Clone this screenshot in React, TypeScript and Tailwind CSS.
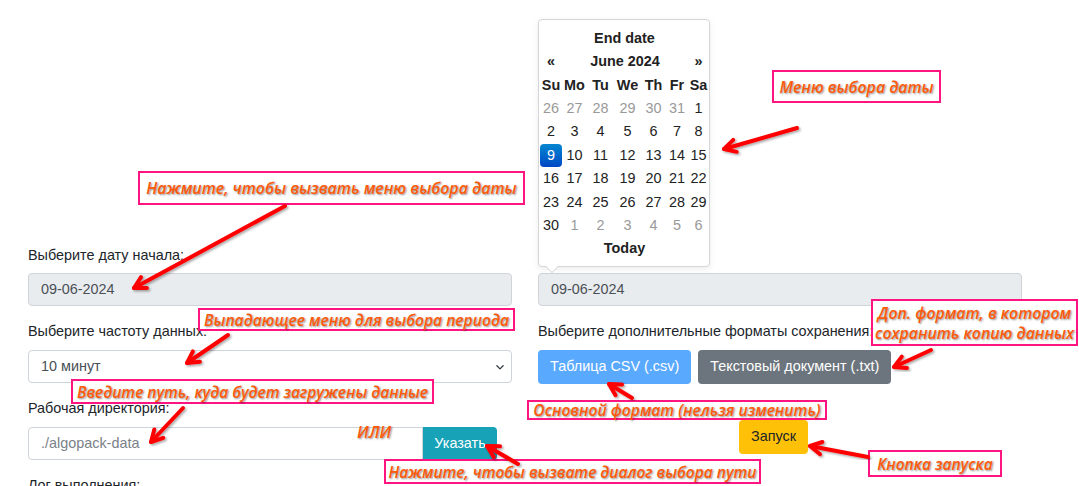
import { useMemo } from 'react'

type Note = {
  text: string[]
  x: number
  y: number
  w: number
  h: number
  size: string
}

type Arrow = { x1: number; y1: number; x2: number; y2: number }

const weeks: { d: number; muted?: boolean; active?: boolean }[][] = [
  [{ d: 26, muted: true }, { d: 27, muted: true }, { d: 28, muted: true }, { d: 29, muted: true }, { d: 30, muted: true }, { d: 31, muted: true }, { d: 1 }],
  [{ d: 2 }, { d: 3 }, { d: 4 }, { d: 5 }, { d: 6 }, { d: 7 }, { d: 8 }],
  [{ d: 9, active: true }, { d: 10 }, { d: 11 }, { d: 12 }, { d: 13 }, { d: 14 }, { d: 15 }],
  [{ d: 16 }, { d: 17 }, { d: 18 }, { d: 19 }, { d: 20 }, { d: 21 }, { d: 22 }],
  [{ d: 23 }, { d: 24 }, { d: 25 }, { d: 26 }, { d: 27 }, { d: 28 }, { d: 29 }],
  [{ d: 30 }, { d: 1, muted: true }, { d: 2, muted: true }, { d: 3, muted: true }, { d: 4, muted: true }, { d: 5, muted: true }, { d: 6, muted: true }],
]

function DatePicker() {
  return (
    <div className="absolute left-[538px] top-[19px] h-[248px] w-[172px] rounded-[4px] border border-[#d6d6d6] bg-white shadow-[0_2px_6px_rgba(0,0,0,0.08)]">
      <div className="grid grid-cols-[22px_25px_27px_27px_25px_22px_21px] auto-rows-[23.4px] items-center pl-[1px] pt-[7px] text-center text-[14.4px] text-[#222]">
        <div className="col-span-7 font-bold">End date</div>
        <div className="font-bold">«</div>
        <div className="col-span-5 font-bold">June 2024</div>
        <div className="font-bold">»</div>
        {['Su', 'Mo', 'Tu', 'We', 'Th', 'Fr', 'Sa'].map((d) => (
          <div key={d} className="font-bold">{d}</div>
        ))}
        {weeks.flat().map((c, i) =>
          c.active ? (
            <div key={i} className="flex h-[23px] items-center justify-center rounded-[4px] bg-gradient-to-b from-[#0a86d0] to-[#0046c4] text-white">
              {c.d}
            </div>
          ) : (
            <div key={i} className={c.muted ? 'text-[#999]' : ''}>{c.d}</div>
          )
        )}
        <div className="col-span-7 font-bold">Today</div>
      </div>
      <div className="absolute -bottom-[7px] left-[6px] h-0 w-0 border-x-[7px] border-t-[7px] border-x-transparent border-t-[#cfcfcf]" />
      <div className="absolute -bottom-[6px] left-[7px] h-0 w-0 border-x-[6px] border-t-[6px] border-x-transparent border-t-white" />
    </div>
  )
}

function Annotation({ note }: { note: Note }) {
  return (
    <div
      className="absolute flex flex-col items-center justify-center border-2 border-[#ff1480] bg-white font-['Open_Sans',sans-serif] font-semibold italic leading-[20px] text-[#ff5a0a] [text-shadow:1px_1px_2px_rgba(0,0,0,0.45)]"
      style={{ left: note.x, top: note.y, width: note.w, height: note.h, fontSize: note.size }}
    >
      {note.text.map((t) => (
        <span key={t} className="whitespace-nowrap">{t}</span>
      ))}
    </div>
  )
}

function Arrows({ arrows }: { arrows: Arrow[] }) {
  return (
    <svg className="pointer-events-none absolute inset-0" width="1079" height="486" viewBox="0 0 1079 486">
      <defs>
        <filter id="sh" x="-20%" y="-20%" width="140%" height="140%">
          <feDropShadow dx="1.5" dy="1.5" stdDeviation="1.2" floodColor="#000" floodOpacity="0.35" />
        </filter>
      </defs>
      {arrows.map((a, i) => {
        const ang = Math.atan2(a.y2 - a.y1, a.x2 - a.x1)
        const len = 13
        const spread = 0.5
        const p1x = a.x2 - len * Math.cos(ang - spread)
        const p1y = a.y2 - len * Math.sin(ang - spread)
        const p2x = a.x2 - len * Math.cos(ang + spread)
        const p2y = a.y2 - len * Math.sin(ang + spread)
        return (
          <g key={i} filter="url(#sh)" stroke="#ff0000" strokeWidth="4" strokeLinecap="round" strokeLinejoin="round" fill="none">
            <line x1={a.x1} y1={a.y1} x2={a.x2} y2={a.y2} />
            <polyline points={`${p1x},${p1y} ${a.x2},${a.y2} ${p2x},${p2y}`} />
          </g>
        )
      })}
    </svg>
  )
}

export default function App() {
  const notes = useMemo<Note[]>(
    () => [
      { text: ['Нажмите, чтобы вызвать меню выбора даты'], x: 138, y: 171, w: 387, h: 34, size: '15.9px' },
      { text: ['Меню выбора даты'], x: 772, y: 70, w: 169, h: 33, size: '15.8px' },
      { text: ['Выпадающее меню для выбора периода'], x: 198, y: 308, w: 317, h: 23, size: '15.6px' },
      { text: ['Доп. формат, в котором', 'сохранить копию данных'], x: 871, y: 299, w: 207, h: 47, size: '15.8px' },
      { text: ['Введите путь, куда будет загружены данные'], x: 71, y: 379, w: 363, h: 25, size: '15.5px' },
      { text: ['Основной формат (нельзя изменить)'], x: 527, y: 400, w: 300, h: 20, size: '15.6px' },
      { text: ['Нажмите, чтобы вызвате диалог выбора пути'], x: 384, y: 459, w: 377, h: 25, size: '15.5px' },
      { text: ['Кнопка запуска'], x: 868, y: 450, w: 134, h: 27, size: '15.5px' },
    ],
    []
  )

  const arrows: Arrow[] = [
    { x1: 285, y1: 206, x2: 134, y2: 288 },
    { x1: 797, y1: 128, x2: 724, y2: 149 },
    { x1: 228, y1: 335, x2: 187, y2: 363 },
    { x1: 183, y1: 408, x2: 151, y2: 442 },
    { x1: 518, y1: 464, x2: 487, y2: 446 },
    { x1: 632, y1: 398, x2: 609, y2: 384 },
    { x1: 931, y1: 350, x2: 894, y2: 367 },
    { x1: 868, y1: 457, x2: 810, y2: 446 },
  ]

  return (
    <div className="relative h-[486px] w-[1079px] overflow-hidden bg-white font-['Liberation_Sans',Arial,sans-serif] text-[14.4px] text-[#212529]">
      <div className="grid grid-cols-[484px_484px] gap-x-[26px] pl-[28px] pt-[246px]">
        <div>
          <div className="mb-[8px] h-[19px] leading-[19px]">Выберите дату начала:</div>
          <div className="mb-[16px] flex h-[33px] items-center rounded-[4px] border border-[#ced4da] bg-[#e9ecef] px-[12px] text-[#495057]">
            09-06-2024
          </div>
          <div className="mb-[9px] h-[19px] leading-[19px]">Выберите частоту данных:</div>
          <div className="mb-[16px] flex h-[33px] items-center justify-between rounded-[4px] border border-[#ced4da] bg-white pl-[12px] pr-[6px] text-[#495057]">
            <span>10 минут</span>
            <svg width="10" height="10" viewBox="0 0 16 16" fill="none">
              <path d="M3 6l5 5 5-5" stroke="#343a40" strokeWidth="2" strokeLinecap="round" strokeLinejoin="round" />
            </svg>
          </div>
          <div className="mb-[9px] h-[19px] leading-[19px]">Рабочая директория:</div>
          <div className="mb-[16px] flex h-[33px]">
            <div className="flex w-[395px] items-center rounded-l-[4px] border border-[#ced4da] bg-white px-[12px] text-[#7a8188]">
              ./algopack-data
            </div>
            <button type="button" className="w-[74px] rounded-r-[4px] bg-[#17a2b8] text-white">
              Указать
            </button>
          </div>
          <div className="h-[19px] leading-[19px]">Лог выполнения:</div>
        </div>

        <div>
          <div className="mb-[8px] h-[19px]" />
          <div className="mb-[16px] flex h-[33px] items-center rounded-[4px] border border-[#ced4da] bg-[#e9ecef] px-[12px] text-[#495057]">
            09-06-2024
          </div>
          <div className="mb-[9px] h-[19px] leading-[19px]">Выберите дополнительные форматы сохранения:</div>
          <div className="flex gap-[7px]">
            <button type="button" className="h-[34px] rounded-[4px] bg-[#59a9ff] px-[12px] text-white">
              Таблица CSV (.csv)
            </button>
            <button type="button" className="h-[34px] rounded-[4px] bg-[#6c757d] px-[12px] text-white">
              Текстовый документ (.txt)
            </button>
          </div>
          <button type="button" className="ml-[201px] mt-[36px] h-[34px] rounded-[4px] bg-[#ffc107] px-[12px] text-[#212529]">
            Запуск
          </button>
        </div>
      </div>

      <DatePicker />

      {notes.map((n) => (
        <Annotation key={n.text[0]} note={n} />
      ))}
      <div className="absolute left-[357px] top-[420px] font-['Open_Sans',sans-serif] text-[16px] font-semibold italic text-[#ff5a0a] [text-shadow:1px_1px_2px_rgba(0,0,0,0.45)]">
        ИЛИ
      </div>

      <Arrows arrows={arrows} />
    </div>
  )
}
